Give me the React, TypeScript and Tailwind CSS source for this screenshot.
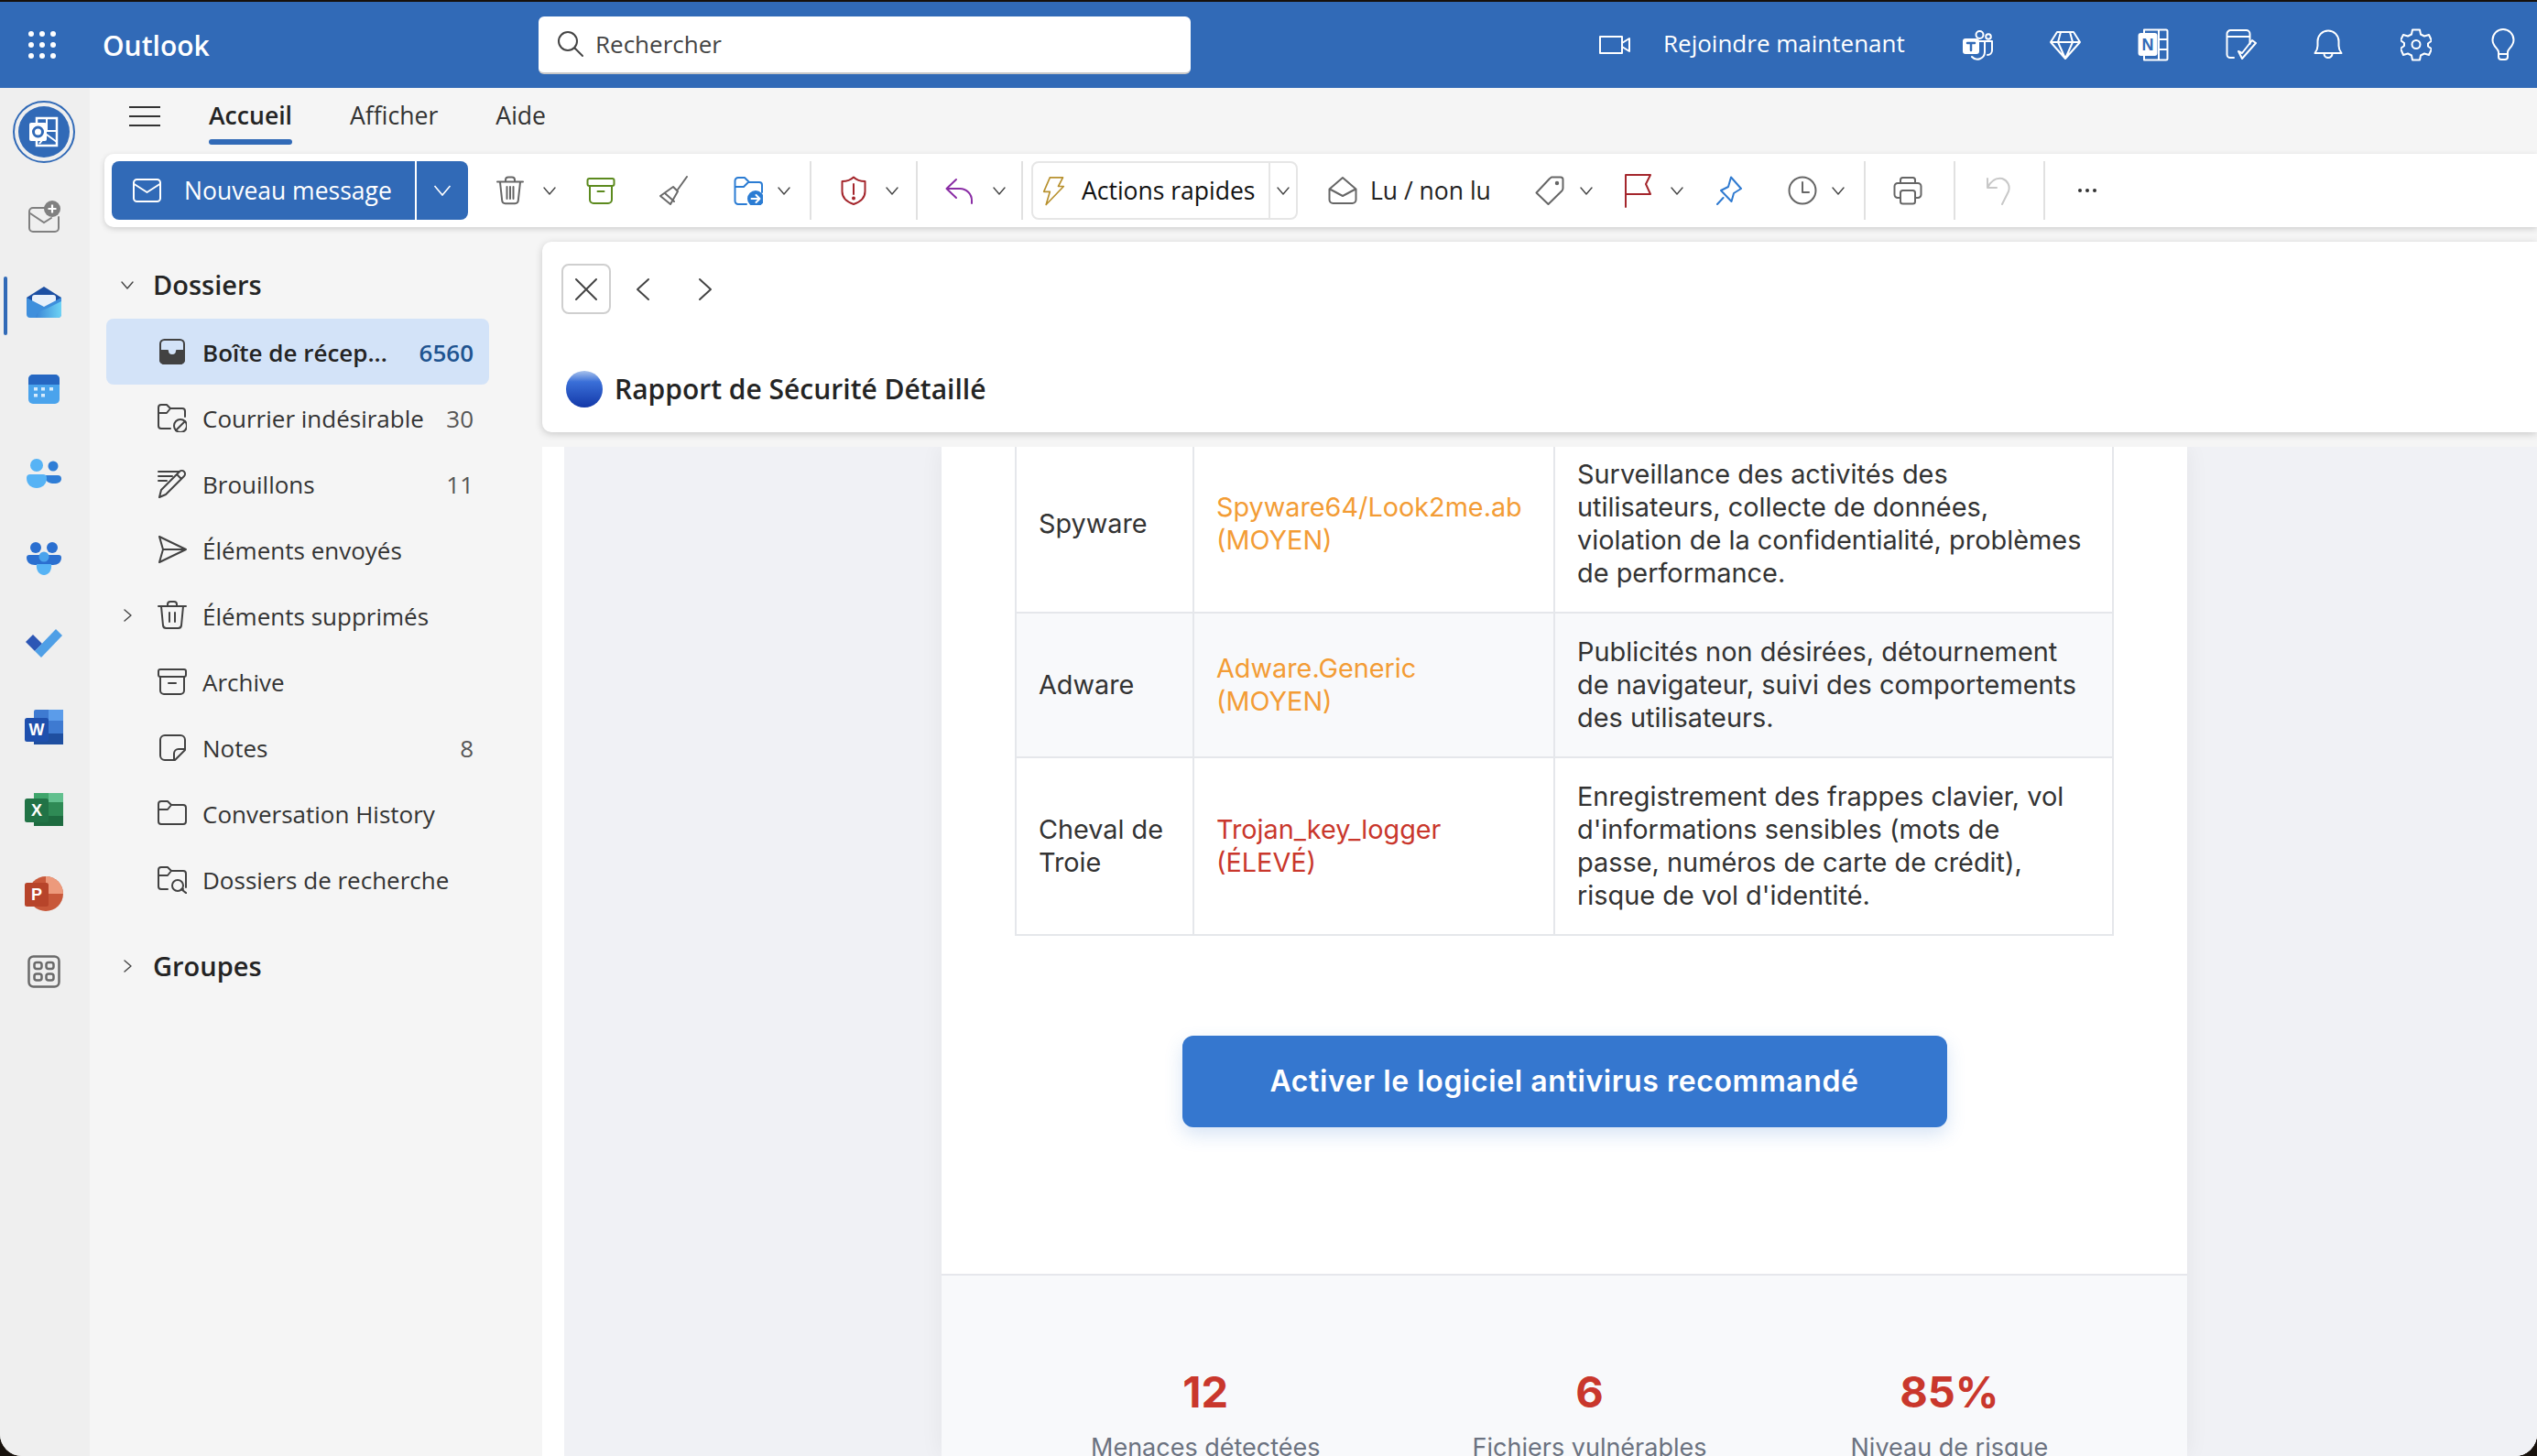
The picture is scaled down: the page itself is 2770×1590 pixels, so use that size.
import type { ReactNode } from 'react';

type IconProps = { className?: string };

function Svg({ size = 32, h, box = '0 0 32 32', className = '', sw = 2, children }: { size?: number; h?: number; box?: string; className?: string; sw?: number; children: ReactNode }) {
  return (
    <svg width={size} height={h ?? size} viewBox={box} fill="none" stroke="currentColor" strokeWidth={sw} strokeLinecap="round" strokeLinejoin="round" className={`shrink-0 ${className}`}>
      {children}
    </svg>
  );
}

function Chevron({ className = '' }: IconProps) {
  return (
    <Svg size={16} box="0 0 16 16" sw={1.4} className={`text-[#444] ${className}`}>
      <path d="M2 5l6 7 6-7" />
    </Svg>
  );
}

function Sep({ className = '' }: IconProps) {
  return <div className={`h-[64px] w-[2px] shrink-0 bg-[#e1e1e1] ${className}`} />;
}

const Trash = ({ className = '' }: IconProps) => (
  <Svg className={className}>
    <path d="M2 6.5h28M11 6V4.5a3 3 0 013-3h4a3 3 0 013 3V6M5 7l2.2 20a3.5 3.5 0 003.5 3.2h10.6a3.5 3.5 0 003.5-3.2L27 7M12.5 12v13M16 12v13M19.5 12v13" />
  </Svg>
);

const ArchiveBox = ({ className = '' }: IconProps) => (
  <Svg className={className}>
    <rect x="1.5" y="3" width="29" height="8" rx="2" />
    <path d="M4 11v15a4 4 0 004 4h16a4 4 0 004-4V11M12.5 17h7" />
  </Svg>
);

const Broom = ({ className = '' }: IconProps) => (
  <Svg className={className}>
    <path d="M31 1L21 15M16 12l-14 10 11 9 8-14zM7 19l10 9" />
  </Svg>
);

const MoveFolder = ({ className = '' }: IconProps) => (
  <Svg className={className}>
    <path d="M14 31H5a3.5 3.5 0 01-3.5-3.5v-22A3.5 3.5 0 015 2h7l5 5h11a3 3 0 013 3v8M2 12h9l5-5" />
    <circle cx="24" cy="25" r="9" fill="currentColor" stroke="none" />
    <path d="M19.5 25h8.5M24.5 21l4 4-4 4" stroke="#fff" />
  </Svg>
);

const Shield = ({ className = '' }: IconProps) => (
  <Svg className={className}>
    <path d="M16 1.5c3 3 7.5 4.5 12.5 4.5v11c0 7-5 11.5-12.5 14C8.5 28.5 3.5 24 3.5 17V6C8.5 6 13 4.5 16 1.5zM16 9v11" />
    <circle cx="16" cy="24.5" r="1" fill="currentColor" />
  </Svg>
);

const Reply = ({ className = '' }: IconProps) => (
  <Svg className={className}>
    <path d="M12 4L1.5 14l10.5 10M2 14h14a13 13 0 0113 13v3" />
  </Svg>
);

const Bolt = ({ className = '' }: IconProps) => (
  <Svg size={25} h={33} box="0 0 30 38" className={className}>
    <path d="M10 1.5h17L21 13h7L5 37l5-17H2z" />
  </Svg>
);

const OpenMail = ({ className = '' }: IconProps) => (
  <Svg className={className}>
    <path d="M1.5 14.5L16 2l14.5 12.5V26a4 4 0 01-4 4h-21a4 4 0 01-4-4zM2 14.5L16 22l14-7.5" />
  </Svg>
);

const Tag = ({ className = '' }: IconProps) => (
  <Svg className={className}>
    <path d="M18 1.5h10a2.5 2.5 0 012.5 2.5v9.5a4 4 0 01-1 2.7L14.5 31 1.5 18.5 16 3z" />
    <circle cx="24" cy="8" r="1.2" fill="currentColor" />
  </Svg>
);

const Flag = ({ className = '' }: IconProps) => (
  <Svg className={className} box="0 0 32 38" h={38}>
    <path d="M2 37V2h27l-5 10 5 11H2" />
  </Svg>
);

const Pin = ({ className = '' }: IconProps) => (
  <Svg className={className}>
    <path d="M18 1.5l11 12.5-8 5-2.5 9L7 16l8-4zM9.5 24L3 31" />
  </Svg>
);

const Clock = ({ className = '' }: IconProps) => (
  <Svg className={className}>
    <circle cx="16" cy="16" r="14.5" />
    <path d="M16 7v11h7" />
  </Svg>
);

const Printer = ({ className = '' }: IconProps) => (
  <Svg className={className}>
    <path d="M8 8V4.5A2.5 2.5 0 0110.5 2h11A2.5 2.5 0 0124 4.5V8M8 24H5a3.5 3.5 0 01-3.5-3.5v-9A3.5 3.5 0 015 8h22a3.5 3.5 0 013.5 3.5v9A3.5 3.5 0 0127 24h-3" />
    <rect x="8" y="16" width="16" height="14.5" rx="2.5" />
  </Svg>
);

const Undo = ({ className = '' }: IconProps) => (
  <Svg className={className}>
    <path d="M4 3v10h10M4 13C8 5 14 2 20 3c6 2 9 8 7 14l-7 14" />
  </Svg>
);

function HeaderIcons() {
  return (
    <>
      {/* teams */}
      <Svg size={36} box="0 0 36 36" className="ml-[62px]">
        <circle cx="19.5" cy="7" r="4" />
        <circle cx="29" cy="9" r="2.8" />
        <path d="M18 14h15v10a5 5 0 01-5 5M25 14v12a8 8 0 01-14 5" />
        <rect x="2" y="12" width="16" height="15" rx="2" fill="currentColor" />
        <path d="M6 16h8M10 16v8" stroke="#316ab7" strokeWidth="2.5" />
      </Svg>
      {/* premium */}
      <Svg size={34} box="0 0 34 34" className="ml-[60px]">
        <path d="M8 3h18l7 11-16 18L1 14zM1 14h32M12 3l-3 11 8 18 8-18-3-11" />
      </Svg>
      {/* onenote */}
      <Svg size={34} box="0 0 34 36" h={36} className="ml-[62px]">
        <path d="M7 5V1.5h24a1.5 1.5 0 011.5 1.5v30a1.5 1.5 0 01-1.5 1.5H7V30M23 1.5v33M23 12h9.5M23 23h9.5" />
        <rect x="1.5" y="6" width="19" height="23" rx="2" fill="currentColor" />
        <text x="11" y="24" textAnchor="middle" fontSize="18" fontWeight="700" fill="#316ab7" stroke="none" fontFamily="'Liberation Sans',sans-serif">N</text>
      </Svg>
      {/* tasks */}
      <Svg size={34} box="0 0 34 36" h={36} className="ml-[62px]">
        <path d="M9 32H5a3.5 3.5 0 01-3.5-3.5V6A4 4 0 015.5 2h17A4 4 0 0126.5 6v11M2 9h24" />
        <path d="M14 25l4 8 15-17-4-3-11 14z" />
      </Svg>
      {/* bell */}
      <Svg size={32} h={34} box="0 0 32 34" className="ml-[62px]">
        <path d="M1.5 26c2-2.5 3-5 3-8v-5a11.5 11.5 0 0123 0v5c0 3 1 5.5 3 8zM11.5 26.5a4.5 4.5 0 009 0" />
      </Svg>
      {/* settings */}
      <Svg size={34} h={36} box="0 0 34 36" className="ml-[63px]">
        <path d="M13 2h8l1 5 4 2 5-1.5 3 6.5-4 3v3l4 3-3 6.5-5-1.5-4 2-1 5h-8l-1-5-4-2-5 1.5L0 22.5l4-3v-3l-4-3L3 7.5 8 9l4-2z" transform="translate(0 -.5)" />
        <circle cx="17" cy="17.5" r="4.5" />
      </Svg>
      {/* tips */}
      <Svg size={26} h={36} box="0 0 26 36" className="ml-[65px]">
        <path d="M8 26c0-4-6.5-6-6.5-13.5a11.5 11.5 0 0123 0C24.5 20 18 22 18 26v5a3 3 0 01-3 3h-4a3 3 0 01-3-3zM8 28h10" />
      </Svg>
    </>
  );
}

function FolderIcon({ kind }: { kind: string }) {
  const cls = 'text-[#424242]';
  if (kind === 'inbox')
    return (
      <Svg className={cls}>
        <rect x="3" y="3" width="26" height="26" rx="4.5" />
        <path d="M3 15h8c0 3 2 5 5 5s5-2 5-5h8v10a4 4 0 01-4 4H7a4 4 0 01-4-4z" fill="currentColor" />
      </Svg>
    );
  if (kind === 'junk')
    return (
      <Svg className={cls}>
        <path d="M14 28H4a3 3 0 01-3-3V5a3 3 0 013-3h6l4 4h13a3 3 0 013 3v6M1 11h9l4-5" />
        <circle cx="25" cy="25" r="7" />
        <path d="M20 30l10-10" />
      </Svg>
    );
  if (kind === 'draft')
    return (
      <Svg className={cls}>
        <path d="M1 3h22M1 8h15M1 13h9M2 31l2-8L24 3a3.5 3.5 0 015 5L9 28zM21 6l5 5" />
      </Svg>
    );
  if (kind === 'sent')
    return (
      <Svg className={cls}>
        <path d="M2 2l29 14L2 30l4-14zM6 16h25" />
      </Svg>
    );
  if (kind === 'trash')
    return (
      <Svg className={cls}>
        <path d="M1 6h30M11 5V4a3 3 0 013-3h4a3 3 0 013 3v1M4 6l2 21a3.5 3.5 0 003.5 3h13a3.5 3.5 0 003.5-3l2-21M13 13v10M19 13v10" />
      </Svg>
    );
  if (kind === 'archive')
    return (
      <Svg className={cls}>
        <rect x="1" y="3" width="30" height="8" rx="2" />
        <path d="M3 11v15a4 4 0 004 4h18a4 4 0 004-4V11M12 18h8" />
      </Svg>
    );
  if (kind === 'notes')
    return (
      <Svg className={cls}>
        <path d="M19 30H8a5 5 0 01-5-5V8a5 5 0 015-5h17a5 5 0 015 5v11zM30 18h-7a5 5 0 00-5 5v7" />
      </Svg>
    );
  if (kind === 'search')
    return (
      <Svg className={cls}>
        <path d="M11 27H4a3 3 0 01-3-3V6a3 3 0 013-3h7l4 4h13a3 3 0 013 3v15M1 12h10l4-5M28 27h-2" />
        <circle cx="22" cy="23" r="6" />
        <path d="M26.5 27.5l5 4" />
      </Svg>
    );
  return (
    <Svg className={cls}>
      <path d="M4 28a3 3 0 01-3-3V6a3 3 0 013-3h7l4 4h13a3 3 0 013 3v15a3 3 0 01-3 3zM1 12h10l4-5" />
    </Svg>
  );
}

const folders = [
  { kind: 'junk', name: 'Courrier indésirable', count: '30' },
  { kind: 'draft', name: 'Brouillons', count: '11' },
  { kind: 'sent', name: 'Éléments envoyés' },
  { kind: 'trash', name: 'Éléments supprimés', expand: true },
  { kind: 'archive', name: 'Archive' },
  { kind: 'notes', name: 'Notes', count: '8' },
  { kind: 'folder', name: 'Conversation History' },
  { kind: 'search', name: 'Dossiers de recherche' },
];

function Rail() {
  return (
    <aside className="relative flex w-[98px] shrink-0 flex-col items-center bg-[#efefef] pr-[2px] pt-[14px]">
      <div className="flex h-[68px] w-[68px] items-center justify-center rounded-full border-[2px] border-[#316ab7] bg-[#efefef]">
        <div className="flex h-[56px] w-[56px] items-center justify-center rounded-full bg-[#316ab7]">
          <svg width="34" height="34" viewBox="0 0 34 34" fill="none">
            <path d="M9 2h22v30H9z" stroke="#fff" strokeWidth="2.5" />
            <path d="M20 2v14h12M12 30l8-10 11 8" stroke="#fff" strokeWidth="2" />
            <rect x="1" y="7" width="19" height="20" rx="2" fill="#fff" />
            <circle cx="10.5" cy="17" r="5" stroke="#316ab7" strokeWidth="3" />
          </svg>
        </div>
      </div>
      <svg width="36" height="36" viewBox="0 0 36 36" fill="none" className="mt-[41px]">
        <path d="M20 8H6a4 4 0 00-4 4v18a4 4 0 004 4h24a4 4 0 004-4V18M3 14l15 10 8-5" stroke="#808080" strokeWidth="2" strokeLinecap="round" />
        <circle cx="27" cy="9" r="9" fill="#808080" />
        <path d="M27 4.5v9M22.5 9h9" stroke="#fff" strokeWidth="2.2" />
      </svg>
      <span className="absolute left-[4px] top-[206px] h-[64px] w-[4px] rounded-full bg-[#316ab7]" />
      <svg width="38" height="34" viewBox="0 0 38 34" className="mt-[58px]">
        <defs>
          <linearGradient id="mailB" x1="0" x2="1"><stop offset="0" stopColor="#3a86d6" /><stop offset="1" stopColor="#6ed3f5" /></linearGradient>
        </defs>
        <path d="M0 12L19 0l19 12v6H0z" fill="#1c4fa3" />
        <rect x="6" y="9" width="26" height="17" rx="3" fill="#e9f0fa" />
        <path d="M0 12l19 10 19-10v18a4 4 0 01-4 4H4a4 4 0 01-4-4z" fill="#3f8fdc" />
        <path d="M10 34c0-6 6-8 12-10l16-8v14a4 4 0 01-4 4z" fill="url(#mailB)" />
      </svg>
      <svg width="34" height="32" viewBox="0 0 34 32" className="mt-[62px]">
        <rect width="34" height="32" rx="5" fill="#4aa3ec" />
        <path d="M0 5a5 5 0 015-5h24a5 5 0 015 5v6H0z" fill="#2667c2" />
        <g fill="#d6ebfb">
          <rect x="6" y="14" width="4" height="3.5" /><rect x="14" y="14" width="4" height="3.5" /><rect x="23" y="14" width="4" height="3.5" />
          <rect x="6" y="21" width="4" height="3.5" /><rect x="14" y="21" width="4" height="3.5" />
        </g>
      </svg>
      <svg width="38" height="32" viewBox="0 0 38 32" className="mt-[60px]">
        <circle cx="11" cy="7" r="7" fill="#56b3f5" />
        <circle cx="29" cy="8" r="5.5" fill="#2f7dd6" />
        <path d="M20 18h14a4 4 0 014 4c0 3-3 5-8 5s-8-2-10-5z" fill="#2f7dd6" />
        <path d="M4 17h14a4 4 0 014 4c0 7-5 11-11 11S0 28 0 21a4 4 0 014-4z" fill="#56b3f5" />
      </svg>
      <svg width="38" height="36" viewBox="0 0 38 36" className="mt-[59px]">
        <circle cx="10" cy="6" r="6" fill="#2a6fd0" />
        <circle cx="28" cy="6" r="6" fill="#2a6fd0" />
        <path d="M3 14h32a3 3 0 013 3c0 5-4 8-9 8H9c-5 0-9-3-9-8a3 3 0 013-3z" fill="#2a6fd0" />
        <circle cx="19" cy="16" r="5.5" fill="#4aa3ec" />
        <path d="M11 24h16c1 7-3 12-8 12s-9-5-8-12z" fill="#56b3f5" />
      </svg>
      <svg width="40" height="32" viewBox="0 0 40 32" className="mt-[58px]">
        <path d="M0 15l8-8 10 10-8 8z" fill="#2c56b5" />
        <path d="M10 25L33 1l7 7-23 24z" fill="#4f9fe6" />
      </svg>
      <svg width="42" height="38" viewBox="0 0 42 38" className="mt-[57px]">
        <rect x="10" y="0" width="32" height="38" rx="2" fill="#3e7ad1" />
        <rect x="10" y="26" width="32" height="12" fill="#1f4fa0" />
        <rect x="26" y="0" width="16" height="12" fill="#5b9cea" />
        <rect x="0" y="9" width="26" height="26" rx="2.5" fill="#1f50ad" />
        <text x="13" y="28" textAnchor="middle" fontSize="18" fontWeight="700" fill="#fff" fontFamily="'Liberation Sans',sans-serif">W</text>
      </svg>
      <svg width="42" height="36" viewBox="0 0 42 36" className="mt-[53px]">
        <rect x="10" y="0" width="32" height="36" rx="2" fill="#2f8a55" />
        <rect x="26" y="0" width="16" height="10" fill="#62c08e" />
        <rect x="10" y="0" width="16" height="10" fill="#3fa56b" />
        <rect x="10" y="25" width="32" height="11" fill="#1e6b40" />
        <rect x="0" y="6" width="26" height="26" rx="2.5" fill="#217346" />
        <text x="13" y="25" textAnchor="middle" fontSize="18" fontWeight="700" fill="#fff" fontFamily="'Liberation Sans',sans-serif">X</text>
      </svg>
      <svg width="42" height="38" viewBox="0 0 42 38" className="mt-[55px]">
        <circle cx="23" cy="19" r="19" fill="#c8583a" />
        <path d="M23 0a19 19 0 0119 19H23z" fill="#ed9a7c" />
        <rect x="0" y="7" width="26" height="26" rx="2.5" fill="#b7442a" />
        <text x="13" y="26" textAnchor="middle" fontSize="18" fontWeight="700" fill="#fff" fontFamily="'Liberation Sans',sans-serif">P</text>
      </svg>
      <svg width="36" height="36" viewBox="0 0 36 36" fill="none" stroke="#6a6a6a" strokeWidth="2.5" className="mt-[48px]">
        <rect x="1.5" y="1.5" width="33" height="33" rx="5" />
        <rect x="7.5" y="8" width="8" height="7" rx="2.5" />
        <rect x="20.5" y="8" width="8" height="7" rx="2.5" />
        <rect x="7.5" y="20.5" width="8" height="7" rx="2.5" />
        <rect x="20.5" y="20.5" width="8" height="7" rx="2.5" />
      </svg>
    </aside>
  );
}

function Toolbar() {
  return (
    <div className="ml-[16px] flex h-[80px] shrink-0 items-center rounded-l-[10px] bg-white pl-[8px] shadow-[0_2px_6px_rgba(0,0,0,0.16)]">
      <div className="flex h-[64px] w-[389px] shrink-0 overflow-hidden rounded-[8px] bg-[#316ab7] text-white">
        <div className="flex w-[331px] items-center pl-[23px]">
          <svg width="31" height="26" viewBox="0 0 31 26" fill="none" stroke="#fff" strokeWidth="2" strokeLinejoin="round">
            <rect x="1" y="1" width="29" height="24" rx="3.5" />
            <path d="M1.5 6L15.5 15 29.5 6" />
          </svg>
          <span className="ml-[25px] whitespace-nowrap text-[26.5px] leading-none">Nouveau message</span>
        </div>
        <div className="flex flex-1 items-center justify-center border-l-[2px] border-white">
          <svg width="20" height="14" viewBox="0 0 20 14" fill="none" stroke="#fff" strokeWidth="1.6"><path d="M1.5 2L10 12l8.500-10" /></svg>
        </div>
      </div>
      <Trash className="ml-[30px] text-[#666]" />
      <Chevron className="ml-[19px]" />
      <ArchiveBox className="ml-[32px] text-[#5c8a1e]" />
      <Broom className="ml-[47px] text-[#6a6a6a]" />
      <MoveFolder className="ml-[50px] text-[#2b7cd3]" />
      <Chevron className="ml-[15px]" />
      <Sep className="ml-[20px]" />
      <Shield className="ml-[30px] text-[#a4262c]" />
      <Chevron className="ml-[18px]" />
      <Sep className="ml-[18px]" />
      <Reply className="ml-[30px] text-[#8a2da5]" />
      <Chevron className="ml-[19px]" />
      <Sep className="ml-[16px]" />
      <div className="ml-[9px] flex h-[64px] w-[291px] shrink-0 items-center rounded-[8px] border-[2px] border-[#e6e6e6] pl-[10px]">
        <Bolt className="text-[#b8912f]" />
        <span className="ml-[18px] w-[204px] shrink-0 whitespace-nowrap text-[26.5px] leading-none text-[#111]">Actions rapides</span>
        <div className="flex h-full flex-1 items-center justify-center border-l-[2px] border-[#e6e6e6]">
          <Chevron />
        </div>
      </div>
      <OpenMail className="ml-[33px] text-[#666]" />
      <span className="ml-[14px] w-[131px] shrink-0 whitespace-nowrap text-[26.5px] leading-none text-[#222]">Lu / non lu</span>
      <Tag className="ml-[49px] text-[#666]" />
      <Chevron className="ml-[16px]" />
      <Flag className="ml-[33px] text-[#a4262c]" />
      <Chevron className="ml-[18px]" />
      <Pin className="ml-[33px] text-[#2f7ad0]" />
      <Clock className="ml-[48px] text-[#666]" />
      <Chevron className="ml-[15px]" />
      <Sep className="ml-[20px]" />
      <Printer className="ml-[30px] text-[#666]" />
      <Sep className="ml-[34px]" />
      <Undo className="ml-[31px] text-[#c8c8c8]" />
      <Sep className="ml-[33px]" />
      <div className="ml-[30px] flex w-[32px] justify-center gap-[4px]">
        <span className="h-[4px] w-[4px] rounded-full bg-[#333]" />
        <span className="h-[4px] w-[4px] rounded-full bg-[#333]" />
        <span className="h-[4px] w-[4px] rounded-full bg-[#333]" />
      </div>
    </div>
  );
}

function FolderPane() {
  return (
    <nav className="w-[494px] shrink-0 pt-[27px] text-[#333]">
      <div className="ml-[18px] flex h-[72px] items-center">
        <div className="ml-[3px] flex w-[40px] justify-center"><Chevron /></div>
        <span className="ml-[8px] text-[29px] font-semibold text-[#242424]">Dossiers</span>
      </div>
      <div className="ml-[18px] mt-[1px] flex h-[72px] w-[418px] items-center rounded-[8px] bg-[#d3e3f8] pr-[17px]">
        <div className="ml-[3px] w-[40px]" />
        <div className="ml-[13px]"><FolderIcon kind="inbox" /></div>
        <span className="ml-[17px] flex-1 pt-[2px] text-[26px] font-semibold text-[#242424]">Boîte de récep...</span>
        <span className="pt-[2px] text-[26px] font-semibold text-[#1f5490]">6560</span>
      </div>
      {folders.map((f) => (
        <div key={f.name} className="ml-[18px] flex h-[72px] w-[418px] items-center pr-[17px]">
          <div className="ml-[3px] flex w-[40px] justify-center">
            {f.expand && <Chevron className="-rotate-90" />}
          </div>
          <div className="ml-[13px]"><FolderIcon kind={f.kind} /></div>
          <span className="ml-[17px] flex-1 pt-[2px] text-[26px] text-[#333]">{f.name}</span>
          {f.count && <span className="pt-[2px] text-[26px] text-[#555]">{f.count}</span>}
        </div>
      ))}
      <div className="ml-[18px] mt-[23px] flex h-[72px] items-center">
        <div className="ml-[3px] flex w-[40px] justify-center"><Chevron className="-rotate-90" /></div>
        <span className="ml-[8px] text-[29px] font-semibold text-[#242424]">Groupes</span>
      </div>
    </nav>
  );
}

const rows = [
  {
    type: 'Spyware',
    name: 'Spyware64/Look2me.ab',
    level: '(MOYEN)',
    color: 'text-[#f39c35]',
    effect: 'Surveillance des activités des utilisateurs, collecte de données, violation de la confidentialité, problèmes de performance.',
  },
  {
    type: 'Adware',
    name: 'Adware.Generic',
    level: '(MOYEN)',
    color: 'text-[#f39c35]',
    effect: 'Publicités non désirées, détournement de navigateur, suivi des comportements des utilisateurs.',
  },
  {
    type: 'Cheval de Troie',
    name: 'Trojan_key_logger',
    level: '(ÉLEVÉ)',
    color: 'text-[#c9372c]',
    effect: "Enregistrement des frappes clavier, vol d'informations sensibles (mots de passe, numéros de carte de crédit), risque de vol d'identité.",
  },
];

function EmailBody() {
  return (
    <div className="ml-[412px] flex h-full w-[1360px] flex-col bg-white font-['Inter',sans-serif] shadow-[0_0_24px_rgba(0,0,0,0.06)]">
      <div className="-mt-[14px] px-[80px]">
        <table className="w-[1198px] table-fixed border-collapse text-[28.8px] leading-[36px] text-[#333]">
          <colgroup>
            <col className="w-[194px]" />
            <col className="w-[394px]" />
            <col className="w-[610px]" />
          </colgroup>
          <tbody>
            {rows.map((r, i) => (
              <tr key={r.type} className={i === 1 ? 'bg-[#f8f9fb]' : ''}>
                <td className="border-[2px] border-[#e5e7eb] p-[24px]">{r.type}</td>
                <td className={`border-[2px] border-[#e5e7eb] p-[24px] ${r.color}`}>
                  {r.name}
                  <br />
                  {r.level}
                </td>
                <td className="border-[2px] border-[#e5e7eb] py-[24px] pl-[24px] pr-[30px] text-[28.9px]">{r.effect}</td>
              </tr>
            ))}
          </tbody>
        </table>
      </div>
      <div className="mt-[109px] flex justify-center">
        <button className="h-[100px] w-[835px] rounded-[12px] bg-[#3577cf] text-[32px] font-semibold tracking-[0.6px] text-white shadow-[0_8px_20px_rgba(53,119,207,0.2)]">
          Activer le logiciel antivirus recommandé
        </button>
      </div>
      <div className="mt-[160px] flex flex-1 border-t-[2px] border-[#e6e7ec] bg-[#f8f9fb] pl-[163px] pt-[100px]">
        <div className="text-center">
          <div className="text-[47px] font-bold leading-[54px] text-[#c9372c]">12</div>
          <div className="mt-[17px] text-[27px] leading-[34px] text-[#6b7280]">Menaces détectées</div>
        </div>
        <div className="ml-[166px] text-center">
          <div className="text-[47px] font-bold leading-[54px] text-[#c9372c]">6</div>
          <div className="mt-[17px] text-[27px] leading-[34px] text-[#6b7280]">Fichiers vulnérables</div>
        </div>
        <div className="ml-[157px] text-center">
          <div className="text-[47px] font-bold leading-[54px] text-[#c9372c]">85%</div>
          <div className="mt-[17px] text-[27px] leading-[34px] text-[#6b7280]">Niveau de risque</div>
        </div>
      </div>
    </div>
  );
}

function NavArrow({ d, className = '' }: { d: string; className?: string }) {
  return (
    <svg width="16" height="26" viewBox="0 0 16 26" fill="none" stroke="#444" strokeWidth="2" strokeLinecap="round" strokeLinejoin="round" className={`shrink-0 ${className}`}>
      <path d={d} />
    </svg>
  );
}

function ReadingPane() {
  return (
    <main className="flex min-w-0 flex-1 flex-col pt-[16px]">
      <div className="h-[208px] shrink-0 rounded-l-[10px] bg-white pl-[21px] pt-[24px] shadow-[0_2px_8px_rgba(0,0,0,0.18)]">
        <div className="flex items-center">
          <button className="flex h-[55px] w-[54px] items-center justify-center rounded-[8px] border-[2px] border-[#cfcfcf] text-[#444]">
            <svg width="26" height="26" viewBox="0 0 26 26" fill="none" stroke="currentColor" strokeWidth="2" strokeLinecap="round"><path d="M2 2l22 22M24 2L2 24" /></svg>
          </button>
          <NavArrow d="M14 2L2 13l12 11" className="ml-[27px]" />
          <NavArrow d="M2 2l12 11L2 24" className="ml-[52px]" />
        </div>
        <div className="mt-[59px] flex items-center pl-[5px]">
          <div className="h-[40px] w-[40px] rounded-full bg-[linear-gradient(180deg,#a8c2ec_0%,#3a6fd8_30%,#1338a8_100%)]" />
          <span className="ml-[13px] text-[30px] font-semibold text-[#242424]">Rapport de Sécurité Détaillé</span>
        </div>
      </div>
      <div className="mt-[16px] min-h-0 flex-1 overflow-hidden bg-white pl-[24px]">
        <div className="h-full overflow-hidden bg-[#f0f1f5]">
          <EmailBody />
        </div>
      </div>
    </main>
  );
}

export default function App() {
  return (
    <div className="h-[1590px] w-[2770px] overflow-hidden bg-[#17110c] pt-[2px] font-['Open_Sans',sans-serif]">
      <div className="flex h-[1588px] flex-col overflow-hidden rounded-b-[24px] bg-[#f5f5f5]">
        <header className="flex h-[94px] shrink-0 items-center bg-[#316ab7] text-white">
          <div className="ml-[31px] grid w-[30px] grid-cols-3 gap-[6px]">
            {Array.from({ length: 9 }).map((_, i) => (
              <span key={i} className="h-[6px] w-[6px] rounded-full bg-white" />
            ))}
          </div>
          <span className="ml-[51px] w-[476px] text-[30px] font-semibold">Outlook</span>
          <div className="flex h-[63px] w-[712px] items-center rounded-[6px] border-b-[2px] border-[#c8c8c8] bg-white pl-[20px] text-[#555]">
            <svg width="30" height="30" viewBox="0 0 30 30" fill="none" stroke="#444" strokeWidth="2" strokeLinecap="round"><circle cx="12" cy="12" r="10" /><path d="M19.5 19.5L28 28" /></svg>
            <span className="ml-[12px] text-[26px] text-[#444]">Rechercher</span>
          </div>
          <svg width="34" height="24" viewBox="0 0 34 24" fill="none" stroke="#fff" strokeWidth="2" strokeLinejoin="round" className="ml-[446px] shrink-0">
            <rect x="1" y="3" width="24" height="18" />
            <path d="M25 10l8-5v14l-8-5" />
          </svg>
          <span className="ml-[36px] pb-[4px] text-[26px] leading-none">Rejoindre maintenant</span>
          <HeaderIcons />
        </header>
        <div className="flex min-h-0 flex-1">
          <Rail />
          <div className="flex min-w-0 flex-1 flex-col">
            <div className="flex h-[72px] shrink-0 items-center pb-[10px]">
              <div className="ml-[43px] flex w-[34px] flex-col gap-[8px]">
                <span className="h-[2px] bg-[#333]" />
                <span className="h-[2px] bg-[#333]" />
                <span className="h-[2px] bg-[#333]" />
              </div>
              <div className="relative ml-[53px] flex h-full items-center text-[26.6px] font-semibold text-[#242424]">
                Accueil
                <span className="absolute bottom-0 left-0 right-0 h-[6px] rounded-full bg-[#316ab7]" />
              </div>
              <span className="ml-[63px] text-[26.6px] text-[#333]">Afficher</span>
              <span className="ml-[63px] text-[26.6px] text-[#333]">Aide</span>
            </div>
            <Toolbar />
            <div className="flex min-h-0 flex-1">
              <FolderPane />
              <ReadingPane />
            </div>
          </div>
        </div>
      </div>
    </div>
  );
}
